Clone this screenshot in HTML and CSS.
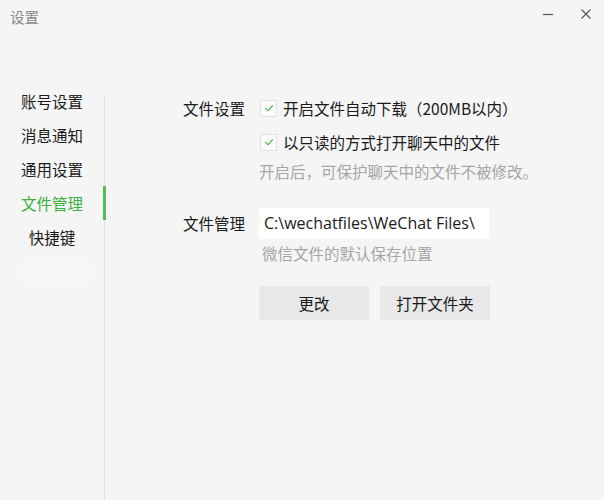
FILE: index.html
```html
<!DOCTYPE html>
<html lang="zh-CN">
<head>
<meta charset="utf-8">
<title>设置</title>
<link rel="stylesheet" href="styles.css">
</head>
<body>
<div class="window">
  <header class="titlebar">
    <span class="title">设置</span>
    <div class="controls">
      <span class="ctl">
        <svg width="12" height="12" viewBox="0 0 12 12"><line x1="1" y1="6.5" x2="11" y2="6.5" stroke="#555" stroke-width="1.2"/></svg>
      </span>
      <span class="ctl">
        <svg width="12" height="12" viewBox="0 0 12 12"><path d="M1.5 1.5 L10.5 10.5 M10.5 1.5 L1.5 10.5" stroke="#555" stroke-width="1.1" fill="none"/></svg>
      </span>
    </div>
  </header>
  <div class="main">
    <nav class="sidebar">
      <div class="nav-item">账号设置</div>
      <div class="nav-item">消息通知</div>
      <div class="nav-item">通用设置</div>
      <div class="nav-item active">文件管理</div>
      <div class="nav-item">快捷键</div>
      <div class="nav-ghost"></div>
    </nav>
    <div class="divider"></div>
    <section class="content">
      <div class="group">
        <div class="label label-top">文件设置</div>
        <div class="field">
          <label class="check">
            <span class="box"><svg width="12" height="12" viewBox="0 0 12 12"><path d="M2.2 6.2 L4.9 8.8 L9.8 3.4" stroke="#3fae46" stroke-width="1.1" fill="none"/></svg></span>
            <span>开启文件自动下载（200MB以内）</span>
          </label>
          <label class="check">
            <span class="box"><svg width="12" height="12" viewBox="0 0 12 12"><path d="M2.2 6.2 L4.9 8.8 L9.8 3.4" stroke="#3fae46" stroke-width="1.1" fill="none"/></svg></span>
            <span>以只读的方式打开聊天中的文件</span>
          </label>
          <div class="hint">开启后，可保护聊天中的文件不被修改。</div>
        </div>
      </div>
      <div class="group group-2">
        <div class="label label-input">文件管理</div>
        <div class="field">
          <div class="path">C:\wechatfiles\WeChat Files\</div>
          <div class="hint hint-2">微信文件的默认保存位置</div>
          <div class="buttons">
            <button class="btn">更改</button>
            <button class="btn">打开文件夹</button>
          </div>
        </div>
      </div>
    </section>
  </div>
</div>
</body>
</html>
```
FILE: styles.css
```css
* { box-sizing: border-box; }
html, body { margin: 0; padding: 0; }
body {
  background: #f5f5f5;
  font-family: "Noto Sans CJK SC", "Noto Sans", sans-serif;
  color: #1a1a1a;
  font-size: 15.5px;
}
.window {
  width: 604px;
  height: 500px;
  display: flex;
  flex-direction: column;
  overflow: hidden;
}
.titlebar {
  height: 34px;
  display: flex;
  align-items: flex-start;
  padding-left: 10px;
}
.title {
  font-size: 14.5px;
  color: #8a8a8a;
  line-height: 20px;
  margin-top: 7px;
}
.controls {
  margin-left: auto;
  display: flex;
  gap: 26px;
  padding-right: 12px;
  padding-top: 8px;
}
.ctl { width: 12px; height: 12px; display: block; }
.ctl svg { display: block; }
.main {
  flex: 1;
  display: flex;
}
.sidebar {
  width: 104px;
  padding-top: 50px;
  display: flex;
  flex-direction: column;
}
.nav-item {
  height: 34px;
  line-height: 34px;
  text-align: center;
  font-size: 15.5px;
  color: #1a1a1a;
  position: relative;
}
.nav-item.active { color: #3aae3a; }
.nav-item.active::after {
  content: "";
  position: absolute;
  right: -2px;
  top: 0;
  width: 3px;
  height: 34px;
  background: #53bd55;
}
.nav-ghost {
  margin: 7px 12px 0 20px;
  height: 22px;
  background: #f7f7f7;
}
.divider {
  width: 1px;
  margin-top: 61px;
  background: #e2e2e2;
}
.content {
  flex: 1;
  padding-left: 78px;
  padding-top: 57px;
}
.group {
  display: flex;
}
.label {
  width: 76px;
  flex: none;
}
.label-top { line-height: 34px; }
.label-input { line-height: 31px; }
.field { display: flex; flex-direction: column; }
.check {
  display: flex;
  align-items: center;
  height: 34px;
  gap: 6px;
  padding-left: 1px;
}
.box {
  width: 17px;
  height: 17px;
  background: #fafafa;
  border: 1px solid #e0e0e0;
  display: flex;
  align-items: center;
  justify-content: center;
}
.box svg { display: block; }
.hint {
  color: #a5a5a5;
  line-height: 24px;
}
.group-2 { margin-top: 25px; }
.path {
  width: 230px;
  height: 31px;
  background: #ffffff;
  line-height: 31px;
  padding-left: 5px;
  font-family: "Open Sans", "Noto Sans CJK SC", sans-serif;
  font-size: 16px;
  white-space: nowrap;
  overflow: hidden;
}
.hint-2 { margin-top: 2px; padding-left: 3px; }
.buttons {
  margin-top: 21px;
  display: flex;
  gap: 11px;
}
.btn {
  width: 110px;
  height: 34px;
  border: none;
  background: #e8e8e8;
  font-family: "Noto Sans CJK SC", sans-serif;
  font-size: 15.5px;
  color: #1a1a1a;
  padding: 0;
}
```
